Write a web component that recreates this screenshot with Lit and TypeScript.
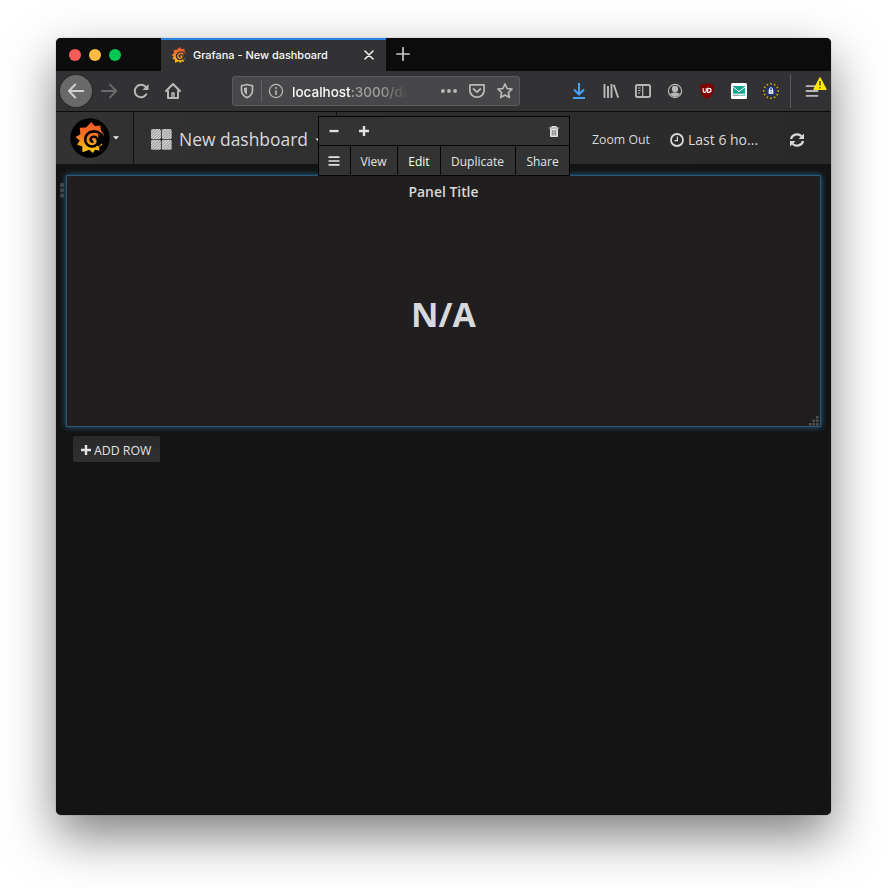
import { LitElement, html, svg, css } from "lit";
import { customElement } from "lit/decorators.js";

const gear = (id: string) => svg`
  <defs><linearGradient id=${id} x1="0" y1="0" x2="0" y2="1">
    <stop offset="0" stop-color="#f0502a"/><stop offset=".5" stop-color="#f67f22"/><stop offset="1" stop-color="#fdd010"/>
  </linearGradient></defs>
  <path fill="url(#${id})" d="M21.3 4L24.800 8.100L30.400 7.500L30.800 12Q34 15.500 34.600 20.500L31 23.500L32.300 27L29 28.800L29.500 32.500L25 31.800L22.900 35L19.300 31.800L12.400 34.300L12.300 28.500L7 26.500L9.700 22.500L5.500 19L10.400 16.300L9.700 9.700L16 9.500Z"/>`;
const spiral = (bg: string) => svg`
  <path fill="none" stroke=${bg} stroke-width="2.600" d="M34.800 23.500C33.500 17 29 13.300 23.800 13.400C18.600 13.600 15 17.400 15.200 21.700C15.400 26 18.700 28.700 22.300 28.500C26 28.300 28.200 25.600 27.900 22.800C27.600 20.200 25.600 18.600 23.400 18.800C21.500 19 20.400 20.400 20.600 21.900C20.800 23.300 22 24 23.400 23.400"/>
  <path fill=${bg} d="M28 16L32 18.500L35.500 24L31.500 25.500L29 28.500L27 27.500L28.600 23Z"/>`;

type Cell = { label: string; cls: string };

@customElement("app-root")
export class AppRoot extends LitElement {
  static styles = css`
    :host { display: block; width: 887px; height: 889px; background: #fff; overflow: hidden; box-sizing: border-box; padding: 38px 56px 0; font-family: "Open Sans", sans-serif; }
    * { box-sizing: border-box; }
    svg { display: block; flex: none; }
    .window { width: 775px; height: 777px; border-radius: 5px; background: #141414; display: flex; flex-direction: column; position: relative;
      box-shadow: 0 0 1px rgba(0,0,0,.6), 0 21px 50px rgba(0,0,0,.5); overflow: visible; }
    .tabs { height: 33px; flex: none; background: #0c0c0d; border-radius: 5px 5px 0 0; display: flex; }
    .lights { width: 105px; display: flex; gap: 8px; padding: 11px 0 0 13px; }
    .light { width: 12px; height: 12px; border-radius: 50%; }
    .red { background: #fc5b57; } .amber { background: #fdbc40; } .green { background: #00c853; }
    .tab { width: 225px; background: #323234; border-top: 2px solid #2a84e4; display: flex; align-items: center; padding: 0 12px 1px 10px; }
    .tabtitle { color: #f9f9fa; font: 500 10.95px/16px Inter, sans-serif; margin-left: 6px; flex: 1; white-space: nowrap; }
    .newtab { padding: 9px 0 0 10px; }
    .toolbar { height: 41px; flex: none; background: #323234; border-bottom: 1px solid #0c0c0d; display: flex; align-items: center; padding-left: 4px; position: relative; color: #b9b9ba; }
    .tool { width: 32px; height: 32px; display: flex; align-items: center; justify-content: center; flex: none; }
    .back { background: #69696a; border-radius: 50%; box-shadow: 0 0 0 1px #29292b; color: #d0d0d1; }
    .forward { color: #6c6c6e; margin-left: 1px; }
    .url { width: 288px; height: 30px; margin: 0 43px; border: 1px solid #5b5b5d; border-radius: 3px; background: #474749; display: flex; align-items: center; padding-left: 6px; }
    .rule { width: 1px; height: 22px; background: #636365; margin: 0 6px; }
    .address { width: 117px; white-space: nowrap; margin: 0 26px 0 8px; padding-top: 1px; font: 500 13.5px/20px Inter, sans-serif; color: #a0a0a2; -webkit-mask-image: linear-gradient(90deg, #000 76%, transparent 99%); }
    .host { color: #f9f9fa; }
    .urlicon { width: 28px; display: flex; justify-content: center; flex: none; }
    .divider { width: 1px; height: 34px; background: #5b5b5d; margin-left: 3px; }
    .menu { width: 44px; display: flex; justify-content: center; position: relative; }
    .warn { position: absolute; left: 22px; top: -6px; }
    .nav { height: 52px; flex: none; display: flex; background: linear-gradient(90deg, #323232, #292929); color: #d8d9da; }
    .brand { width: 78px; border-right: 1px solid #101010; display: flex; align-items: center; padding-left: 14px; gap: 3px; }
    .dash { width: 203px; border-right: 1px solid #101010; display: flex; align-items: center; padding: 2px 0 0 17px; }
    .dashname { font-size: 17.45px; line-height: 24px; margin-left: 7px; width: 134px; white-space: nowrap; }
    .times { margin-left: auto; display: flex; align-items: center; padding: 3px 26px 0 0; white-space: nowrap; }
    .zoom { font-size: 12.3px; width: 78px; }
    .range { font-size: 14px; margin-left: 4px; width: 101px; }
    .panelmenu { position: absolute; left: 262px; top: 78px; width: 252px; height: 60px; border: 1px solid #050505; background: #333; color: #e3e3e3; display: flex; flex-direction: column; z-index: 2; }
    .actions { height: 29px; flex: none; display: flex; align-items: center; padding: 0 10px 0 10px; border-bottom: 1px solid #050505; }
    .plus { margin-left: 19.5px; }
    .trash { margin-left: auto; }
    .links { flex: 1; display: flex; font-size: 12px; line-height: 31px; text-align: center; height: 29px; }
    .cell { border-right: 1px solid #050505; }
    .cell:last-child { border-right: 0; }
    .burger { width: 32px; display: flex; align-items: center; justify-content: center; padding-top: 1px; padding-right: 2px; }
    .view { width: 47px; padding-right: 1px; } .edit { width: 43px; color: #fff; } .dup { width: 75px; padding-right: 1px; } .share { width: 53px; }
    .body { padding: 12px 11px 0; display: flex; }
    .side { position: absolute; left: 4px; top: 145px; }
    .panel { width: 753px; height: 250px; background: #211e1f; box-shadow: 0 0 0 1px #2b5878, 0 0 6px 1px #286894; position: relative; display: flex; flex-direction: column; align-items: center; color: #d8d9da; }
    .title { font-size: 13.9px; font-weight: 600; line-height: 20px; margin-top: 6px; }
    .value { font-size: 33.8px; font-weight: 700; line-height: 48px; margin-top: 88px; }
    .grip { position: absolute; right: 1px; bottom: 0; }
    .add { margin: 10px 0 0 17px; width: 87px; height: 26px; background: linear-gradient(#292929, #303030); border-radius: 2px; color: #e3e3e3; display: flex; align-items: center; gap: 3px; padding: 2px 0 0 8px; font-size: 12.3px; white-space: nowrap; }
  `;

  private cells: Cell[] = [
    { label: "View", cls: "view" },
    { label: "Edit", cls: "edit" },
    { label: "Duplicate", cls: "dup" },
    { label: "Share", cls: "share" },
  ];

  private line(d: string, w = 2) {
    return html`<svg width="16" height="16" viewBox="0 0 16 16" fill="none" stroke="currentColor" stroke-width=${w} stroke-linecap="round" stroke-linejoin="round"><path d=${d}/></svg>`;
  }

  render() {
    const stars = Array.from({ length: 12 }, (_, i) => i * 30);
    return html`
      <div class="window">
        <div class="tabs">
          <div class="lights"><div class="light red"></div><div class="light amber"></div><div class="light green"></div></div>
          <div class="tab">
            <svg width="16" height="16" viewBox="5 4 30 31">${gear("tabGear")}${spiral("#323234")}</svg>
            <div class="tabtitle">Grafana - New dashboard</div>
            <svg width="10" height="10" viewBox="0 0 10 10" stroke="#f0f0f0" stroke-width="1.6" stroke-linecap="round"><path d="M1 1L9 9M9 1L1 9"/></svg>
          </div>
          <svg class="newtab" width="24" height="23" viewBox="0 0 14 14" stroke="#c8c8c8" stroke-width="1.7" stroke-linecap="round"><path d="M7 .8V13.2M.8 7H13.2"/></svg>
        </div>

        <div class="toolbar">
          <div class="tool back">${this.line("M15.3 8H1M7.2 1.5L.9 8L7.2 14.5")}</div>
          <div class="tool forward">${this.line("M.7 8H15M9 1.7L15.2 8L9 14.3", 1.8)}</div>
          <div class="tool"><svg width="16" height="16" viewBox="0 0 16 16" fill="none" stroke="currentColor" stroke-width="2" stroke-linecap="round"><path d="M13.3 11.3A6.2 6.2 0 1 1 12.6 3.9"/><path d="M15.5 1V7H9.5Z" fill="currentColor" stroke="none"/></svg></div>
          <div class="tool"><svg width="16" height="16" viewBox="0 0 16 16" fill="none" stroke="currentColor" stroke-width="2" stroke-linecap="round" stroke-linejoin="round"><path d="M1 8L8 1L15 8M3 8V15H13V8"/><path d="M7 14V10H9V14" stroke-width="1.5"/></svg></div>
          <div class="url">
            <svg width="16" height="16" viewBox="0 0 16 16"><path d="M8 1.5C10 2.3 12 2.6 13.5 2.6V7C13.5 10.5 11.5 13.2 8 14.6C4.500 13.2 2.500 10.5 2.500 7V2.600C4 2.600 6 2.300 8 1.500Z" fill="none" stroke="#b9b9ba" stroke-width="1.7" stroke-linejoin="round"/><path d="M8 4.300V11.700C6 10.600 5 9 5 7V4.900Z" fill="#b9b9ba"/></svg>
            <div class="rule"></div>
            <svg width="16" height="16" viewBox="0 0 16 16"><circle cx="8" cy="8" r="6.600" fill="none" stroke="#b9b9ba" stroke-width="1.200"/><path d="M8 7.200V12" stroke="#b9b9ba" stroke-width="1.600"/><circle cx="8" cy="4.900" r="1" fill="#b9b9ba"/></svg>
            <div class="address"><span class="host">localhost</span>:3000/da</div>
            <div class="urlicon"><svg width="16" height="16" viewBox="0 0 16 16" fill="#b9b9ba"><circle cx="1.900" cy="8" r="1.900"/><circle cx="8" cy="8" r="1.900"/><circle cx="14.100" cy="8" r="1.900"/></svg></div>
            <div class="urlicon">${this.line("M1.500 1.800H14.500Q15.200 1.800 15.200 2.600V7A7.200 7.200 0 0 1 .8 7V2.600Q.8 1.800 1.500 1.800ZM4.600 6L8 9.200L11.400 6", 1.8)}</div>
            <div class="urlicon">${this.line("M8 1L10.100 5.500L15 6.100L11.400 9.500L12.300 14.500L8 12L3.700 14.500L4.600 9.500L1 6.100L5.900 5.500Z", 1.7)}</div>
          </div>
          <div class="tool"><svg width="16" height="18" viewBox="0 0 16 18" fill="none" stroke="#4aa0f5" stroke-width="2"><path d="M8 1V12M3 7.500L8 12.500L13 7.500M2 16H14" stroke-linejoin="round"/></svg></div>
          <div class="tool"><svg width="16" height="16" viewBox="0 0 16 16" fill="none" stroke="currentColor" stroke-width="1.900"><path d="M1.500 1V15M5 3V15M8.500 1V15M10.800 1.700L15.200 14.800"/></svg></div>
          <div class="tool"><svg width="16" height="16" viewBox="0 0 16 16" fill="none" stroke="currentColor" stroke-width="1.900"><rect x=".9" y="2" width="14.200" height="12" rx="1.500"/><path d="M7.700 2V14M3 5H5.700M3 7.500H5.700M3 10H5" stroke-width="1.200"/></svg></div>
          <div class="tool"><svg width="16" height="16" viewBox="0 0 16 16"><circle cx="8" cy="8" r="6.600" fill="none" stroke="currentColor" stroke-width="1.200"/><circle cx="8" cy="6" r="3.200" fill="currentColor"/><path d="M3 11C5 9 11 9 13 11Q11 14 8 14Q5 14 3 11Z" fill="currentColor"/></svg></div>
          <div class="tool"><svg width="16" height="16" viewBox="0 0 16 16"><path d="M8 0Q12 2 14.700 2V7Q14.500 12.500 8 16Q1.500 12.500 1.300 7V2Q4 2 8 0Z" fill="#800000"/><path d="M4.200 5.300V8Q4.200 9.400 5.600 9.400Q7.200 9.400 7.200 8V5.300M8.700 5.300V9.400H9.600Q12 9.300 12 7.300Q12 5.300 9.800 5.300Z" fill="none" stroke="#fff" stroke-width="1.200"/></svg></div>
          <div class="tool"><svg width="16" height="16" viewBox="0 0 16 16"><rect width="16" height="16" rx="1.500" fill="#fff"/><path d="M2 3H14V10.700H2Z" fill="#16a38f"/><path d="M2 4L8 8.500L14 4" fill="none" stroke="#fff"/><path d="M2 12.300H8" stroke="#738b91"/><path d="M8.500 12.300H14" stroke="#58b9a9"/></svg></div>
          <div class="tool"><svg width="16" height="16" viewBox="0 0 16 16"><circle cx="8" cy="8" r="5" fill="#193778"/>${stars.map(a => svg`<rect x="7.300" y="0" width="1.500" height="1.500" fill="#e1b900" transform="rotate(${a} 8 8)"/>`)}<rect x="5.700" y="7" width="4.600" height="3.800" fill="#fff"/><path d="M6.600 7V5.500Q8 3.700 9.400 5.500V7" fill="none" stroke="#fff" stroke-width="1"/><path d="M8 8V9.500" stroke="#193778"/></svg></div>
          <div class="divider"></div>
          <div class="menu">${this.line("M3.500 3.200H14.500M3.500 8H14.500M3.500 12.800H14.500", 1.8)}
            <svg class="warn" width="14" height="14" viewBox="0 0 14 14"><path d="M7 1L12.900 12.300H1.100Z" fill="#ffe900" stroke="#ffe900" stroke-width="1.500" stroke-linejoin="round"/><path d="M7 4V8.500M7 10V11.500" stroke="#4a4500" stroke-width="1.400"/></svg>
          </div>
        </div>

        <div class="nav">
          <div class="brand">
            <svg width="40" height="40" viewBox="0 0 40 40"><circle cx="20" cy="20" r="19.700" fill="#000"/>${gear("navGear")}${spiral("#000")}</svg>
            <svg width="6" height="4" viewBox="0 0 6 4"><path d="M0 .3H6L3 3.600Z" fill="#eee"/></svg>
          </div>
          <div class="dash">
            <svg width="21" height="21" viewBox="0 0 21 21">
              <defs><pattern id="hatch" width="2" height="2" patternUnits="userSpaceOnUse" patternTransform="rotate(45)"><rect width="2" height="2" fill="#777"/><rect width="1.300" height="2" fill="#dedede"/></pattern></defs>
              <g fill="url(#hatch)"><rect width="9.900" height="9.900" rx="1.500"/><rect x="10.800" width="9.900" height="9.900" rx="1.500"/><rect y="10.800" width="9.900" height="9.900" rx="1.500"/><rect x="10.800" y="10.800" width="9.900" height="9.900" rx="1.500"/></g>
            </svg>
            <div class="dashname">New dashboard</div>
            <svg width="9" height="5" viewBox="0 0 9 5"><path d="M2.500 1.500H8.500L5.500 4.800Z" fill="#eee"/></svg>
          </div>
          <div class="times">
            <div class="zoom">Zoom Out</div>
            <svg width="14" height="14" viewBox="0 0 14 14" fill="none" stroke="#d8d9da"><circle cx="7" cy="7" r="6" stroke-width="1.800"/><path d="M7.400 3.500V7.600H4.500" stroke-width="1.200"/></svg>
            <div class="range">Last 6 ho...</div>
            <svg width="16" height="14" viewBox="0 0 16 14"><g fill="none" stroke="#d8d9da" stroke-width="2.200"><path d="M2 6A6 5.500 0 0 1 12.500 3.300M14 8A6 5.500 0 0 1 3.500 10.700"/></g><path d="M15 .5V6H9.500ZM1 13.500V8H6.500Z" fill="#d8d9da"/></svg>
          </div>
        </div>

        <div class="panelmenu">
          <div class="actions">
            <svg width="10" height="10" viewBox="0 0 10 10"><path d="M.5 3.900H9.500V6.200H.5Z" fill="#e3e3e3"/></svg>
            <svg class="plus" width="10" height="10" viewBox="0 0 10 10"><path d="M3.800 0H6.200V3.800H10V6.200H6.200V10H3.800V6.200H0V3.800H3.800Z" fill="#e3e3e3"/></svg>
            <svg class="trash" width="10" height="11" viewBox="0 0 10 11"><path d="M0 2H10M3 1.700V.6H7V1.700" fill="none" stroke="#e3e3e3" stroke-width="1.200"/><path d="M1 2.500H9V10Q9 11 8 11H2Q1 11 1 10Z" fill="#e3e3e3"/><path d="M3.300 4V9.500M5 4V9.500M6.700 4V9.500" stroke="#555" stroke-width=".7"/></svg>
          </div>
          <div class="links">
            <div class="cell burger"><svg width="12" height="10" viewBox="0 0 12 10"><path d="M.5 1.200H11.500M.5 5H11.500M.5 8.800H11.500" stroke="#e3e3e3" stroke-width="1.700"/></svg></div>
            ${this.cells.map(c => html`<div class="cell ${c.cls}">${c.label}</div>`)}
          </div>
        </div>

        <svg class="side" width="4" height="15" viewBox="0 0 4 15" fill="#444"><rect width="4" height="4" rx="1"/><rect y="5.300" width="4" height="4" rx="1"/><rect y="10.600" width="4" height="4" rx="1"/></svg>
        <div class="body">
          <div class="panel">
            <div class="title">Panel Title</div>
            <div class="value">N/A</div>
            <svg class="grip" width="10" height="10" viewBox="0 0 10 10" fill="#505050"><path d="M7 0H9.500V2.500H7ZM3.500 3.500H6V6H3.500ZM7 3.500H9.500V6H7ZM0 7H2.500V9.500H0ZM3.500 7H6V9.500H3.500ZM7 7H9.500V9.500H7Z"/></svg>
          </div>
        </div>
        <div class="add"><svg width="10" height="10" viewBox="0 0 10 10"><path d="M3.800 0H6.200V3.800H10V6.200H6.200V10H3.800V6.200H0V3.800H3.800Z" fill="#e3e3e3"/></svg>ADD ROW</div>
      </div>`;
  }
}
